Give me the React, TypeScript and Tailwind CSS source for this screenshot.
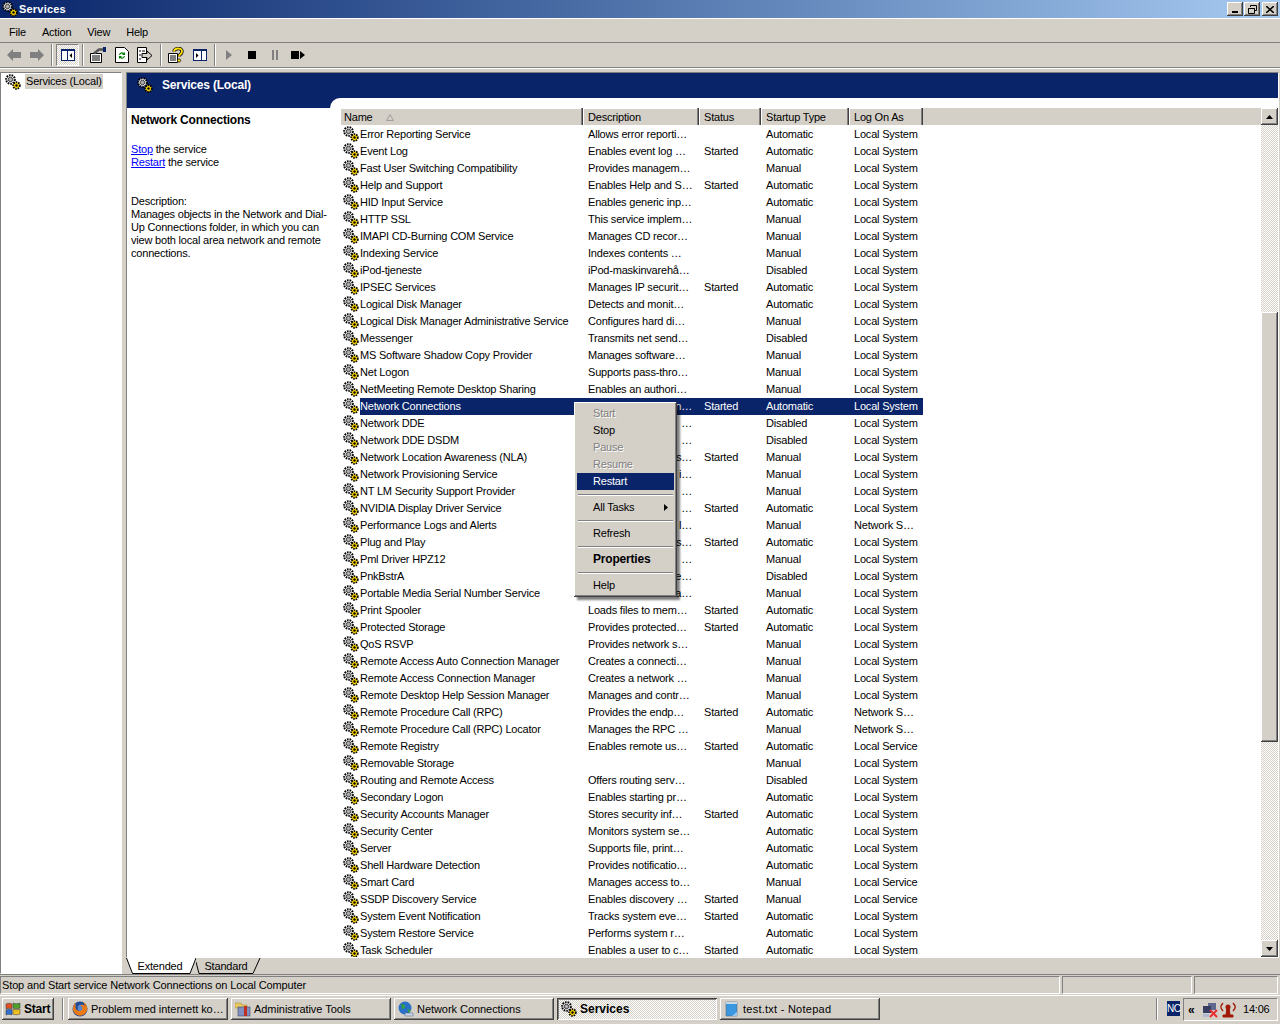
import { ReactNode } from "react";

const raised =
  "bg-[#d4d0c8] shadow-[inset_-1px_-1px_#404040,inset_1px_1px_#fff,inset_-2px_-2px_#808080,inset_2px_2px_#d4d0c8]";
const sunken = "border-t border-l border-t-[#808080] border-l-[#808080] border-b border-r border-b-white border-r-white";
const checker =
  "bg-[repeating-conic-gradient(#d4d0c8_0_25%,#fff_0_50%)] bg-[length:2px_2px]";

// name | description | status | startup (A/M/D) | log on (S/N/L)
const services = [
  "Error Reporting Service|Allows error reporti…||A|S",
  "Event Log|Enables event log …|Started|A|S",
  "Fast User Switching Compatibility|Provides managem…||M|S",
  "Help and Support|Enables Help and S…|Started|A|S",
  "HID Input Service|Enables generic inp…||A|S",
  "HTTP SSL|This service implem…||M|S",
  "IMAPI CD-Burning COM Service|Manages CD recor…||M|S",
  "Indexing Service|Indexes contents …||M|S",
  "iPod-tjeneste|iPod-maskinvarehå…||D|S",
  "IPSEC Services|Manages IP securit…|Started|A|S",
  "Logical Disk Manager|Detects and monit…||A|S",
  "Logical Disk Manager Administrative Service|Configures hard di…||M|S",
  "Messenger|Transmits net send…||D|S",
  "MS Software Shadow Copy Provider|Manages software…||M|S",
  "Net Logon|Supports pass-thro…||M|S",
  "NetMeeting Remote Desktop Sharing|Enables an authori…||M|S",
  "Network Connections|n…|Started|A|S",
  "Network DDE|…||D|S",
  "Network DDE DSDM|…||D|S",
  "Network Location Awareness (NLA)|s…|Started|M|S",
  "Network Provisioning Service|i…||M|S",
  "NT LM Security Support Provider|…||M|S",
  "NVIDIA Display Driver Service|…|Started|A|S",
  "Performance Logs and Alerts|l…||M|N",
  "Plug and Play|s…|Started|A|S",
  "Pml Driver HPZ12|…||M|S",
  "PnkBstrA|e…||D|S",
  "Portable Media Serial Number Service|a…||M|S",
  "Print Spooler|Loads files to mem…|Started|A|S",
  "Protected Storage|Provides protected…|Started|A|S",
  "QoS RSVP|Provides network s…||M|S",
  "Remote Access Auto Connection Manager|Creates a connecti…||M|S",
  "Remote Access Connection Manager|Creates a network …||M|S",
  "Remote Desktop Help Session Manager|Manages and contr…||M|S",
  "Remote Procedure Call (RPC)|Provides the endp…|Started|A|N",
  "Remote Procedure Call (RPC) Locator|Manages the RPC …||M|N",
  "Remote Registry|Enables remote us…|Started|A|L",
  "Removable Storage|||M|S",
  "Routing and Remote Access|Offers routing serv…||D|S",
  "Secondary Logon|Enables starting pr…||A|S",
  "Security Accounts Manager|Stores security inf…|Started|A|S",
  "Security Center|Monitors system se…||A|S",
  "Server|Supports file, print…||A|S",
  "Shell Hardware Detection|Provides notificatio…||A|S",
  "Smart Card|Manages access to…||M|L",
  "SSDP Discovery Service|Enables discovery …|Started|M|L",
  "System Event Notification|Tracks system eve…|Started|A|S",
  "System Restore Service|Performs system r…||A|S",
  "Task Scheduler|Enables a user to c…|Started|A|S",
].map((s) => s.split("|"));

const startup: Record<string, string> = { A: "Automatic", M: "Manual", D: "Disabled" };
const logon: Record<string, string> = { S: "Local System", N: "Network S…", L: "Local Service" };

function Gears({ className = "" }: { className?: string }) {
  return (
    <svg viewBox="0 0 16 16" className={`w-4 h-4 shrink-0 ${className}`}>
      <circle cx="5.500" cy="5.500" r="4.300" fill="#fff" stroke="#000" strokeWidth="2" strokeDasharray="1.600 1" />
      <circle cx="5.500" cy="5.500" r="2.200" fill="#b0b0b0" stroke="#000" strokeWidth=".7" />
      <circle cx="11.500" cy="11.500" r="3.300" fill="#ffd800" stroke="#000" strokeWidth="1.800" strokeDasharray="1.500 .9" />
      <circle cx="11.500" cy="11.500" r="1.200" fill="#000" />
    </svg>
  );
}

function Tool({ children, className = "" }: { children: ReactNode; className?: string }) {
  return <div className={`w-[23px] h-[22px] flex items-center justify-center ${className}`}>{children}</div>;
}

function Sep() {
  return <div className="w-[2px] h-[22px] mx-[3px] bg-[#808080] border-r border-white" />;
}

function Toolbar() {
  return (
    <div className="h-[25px] border-b border-b-[#808080] flex items-center pl-[2px]">
      <Tool>
        <svg viewBox="0 0 14 12" className="w-[14px] h-[12px]"><path d="M0 6 6 0v3h8v6H6v3z" fill="#808080" /></svg>
      </Tool>
      <Tool>
        <svg viewBox="0 0 14 12" className="w-[14px] h-[12px]"><path d="M14 6 8 0v3H0v6h8v3z" fill="#808080" /></svg>
      </Tool>
      <Sep />
      <Tool className={`${checker} border border-t-[#808080] border-l-[#808080] border-r-white border-b-white`}>
        <svg viewBox="0 0 14 12" className="w-[14px] h-[12px]">
          <rect x=".5" y=".5" width="13" height="11" fill="#fff" stroke="#0a246a" />
          <rect x="0" y="0" width="14" height="2" fill="#0a246a" />
          <rect x="6" y="0" width="1" height="12" fill="#0a246a" />
          <path d="M11 4v5L8.500 6.500z" fill="#000" />
        </svg>
      </Tool>
      <Sep />
      <Tool className="-ml-[1px] mr-[1px]">
        <svg viewBox="0 0 16 16" className="w-4 h-4">
          <path d="M.5 6.500h11v9H.5z" fill="#fff" stroke="#000" />
          <path d="M2 9h8M2 11h8M2 13h8" stroke="#000" />
          <path d="M4 6.500 9 2.500h5" fill="none" stroke="#555" strokeWidth="2.500" />
          <rect x="13" y="0" width="3" height="5" fill="#0a246a" />
        </svg>
      </Tool>
      <Tool>
        <svg viewBox="0 0 14 16" className="w-[14px] h-4">
          <path d="M.5.5h9l4 4v11H.5z" fill="#fff" stroke="#000" />
          <path d="M4 8a3 3 0 0 1 5-2l1-1v3H7l1-1a2 2 0 0 0-3 1zM10 9a3 3 0 0 1-5 2l-1 1V9h3l-1 1a2 2 0 0 0 3-1z" fill="#008000" />
        </svg>
      </Tool>
      <Tool>
        <svg viewBox="0 0 16 16" className="w-4 h-4">
          <path d="M.5.5h9v15H.5z" fill="#fff" stroke="#000" />
          <path d="M2 4h2M2 8h2M2 12h2M5 4h3" stroke="#000" />
          <path d="M5 6.500h5V4l5 4.500-5 4.500v-2.500H5z" fill="#d4d0c8" stroke="#000" />
        </svg>
      </Tool>
      <div className="w-[2px] h-[22px] mx-[3px] ml-[4px] bg-[#808080] border-r border-white" />
      <Tool className="-ml-[1px] mr-[1px]">
        <svg viewBox="0 0 16 16" className="w-4 h-4">
          <path d="M.5 6.500h9v9h-9z" fill="#fff" stroke="#000" />
          <path d="M2 9h6M2 11h6M2 13h6" stroke="#000" />
          <path d="M6 4.500C6 1 14 0 14 4.500c0 3-3 2.500-3 5" fill="none" stroke="#000" strokeWidth="3.400" />
          <path d="M6 4.500C6 1 14 0 14 4.500c0 3-3 2.500-3 5" fill="none" stroke="#ffe000" strokeWidth="1.800" />
          <circle cx="11" cy="13.500" r="1.600" fill="#ffe000" stroke="#000" strokeWidth=".7" />
        </svg>
      </Tool>
      <Tool>
        <svg viewBox="0 0 14 12" className="w-[14px] h-[12px]">
          <rect x=".5" y=".5" width="13" height="11" fill="#fff" stroke="#0a246a" />
          <rect x="0" y="0" width="14" height="2" fill="#0a246a" />
          <rect x="8" y="0" width="1" height="12" fill="#0a246a" />
          <path d="M3 4v5l2.500-2.500z" fill="#000" />
        </svg>
      </Tool>
      <div className="w-[2px] h-[22px] ml-[3px] mr-[1px] bg-[#808080] border-r border-white" />
      <Tool>
        <svg viewBox="0 0 6 10" className="w-[6px] h-[10px]"><path d="M0 0l6 5-6 5z" fill="#808080" /></svg>
      </Tool>
      <Tool>
        <div className="w-[8px] h-[8px] bg-black" />
      </Tool>
      <Tool>
        <div className="w-[6px] h-[10px] border-x-2 border-[#808080]" />
      </Tool>
      <Tool>
        <svg viewBox="0 0 14 8" className="w-[14px] h-[8px]"><path d="M0 0h8v8H0zM9 0l5 4-5 4z" fill="#000" /></svg>
      </Tool>
    </div>
  );
}

function ServiceRow({ row, index }: { row: string[]; index: number }) {
  const selected = index === 16;
  const tail = index >= 16 && index <= 27;
  return (
    <div className="h-[17px] flex leading-[17px] whitespace-nowrap">
      <div className="w-[20px] shrink-0 pl-[3px]">
        <Gears />
      </div>
      <div className={`flex ${selected ? "bg-[#0a246a] text-white" : ""}`}>
        <div className="w-[222px]">{row[0]}</div>
        <div className={`w-[116px] pl-[6px] pr-[6px] ${tail ? "text-right" : ""}`}>{row[1]}</div>
        <div className="w-[62px] pl-[6px]">{row[2]}</div>
        <div className="w-[88px] pl-[6px]">{startup[row[3]]}</div>
        <div className="w-[75px] pl-[6px]">{logon[row[4]]}</div>
      </div>
    </div>
  );
}

function HeaderCell({ width, children }: { width: string; children: ReactNode }) {
  return (
    <div className={`${width} h-full pl-[5px] pt-[1px] border-r border-r-[#404040] shadow-[inset_-1px_0_#808080,inset_1px_1px_#fff] flex items-center`}>
      {children}
    </div>
  );
}

function Scrollbar() {
  return (
    <div className="w-[17px] shrink-0 flex flex-col">
      <div className={`${raised} h-[17px] flex items-center justify-center`}>
        <svg viewBox="0 0 7 4" className="w-[7px] h-[4px]"><path d="M3.500 0 7 4H0z" /></svg>
      </div>
      <div className={`${checker} h-[187px]`} />
      <div className={`${raised} h-[430px]`} />
      <div className={`${checker} flex-1`} />
      <div className={`${raised} h-[17px] flex items-center justify-center`}>
        <svg viewBox="0 0 7 4" className="w-[7px] h-[4px]"><path d="M3.500 4 7 0H0z" /></svg>
      </div>
    </div>
  );
}

function ContextMenu() {
  const disabled = "text-[#808080] [text-shadow:1px_1px_#fff]";
  const item = "h-[17px] leading-[17px] pl-[16px]";
  const line = <div className="h-[9px] flex items-center mx-[1px]"><div className="w-full h-[2px] bg-[#808080] border-b border-white" /></div>;
  return (
    <div className="absolute left-[574px] top-[402px] w-[103px] h-[195px] px-[3px] py-[3px] text-black shadow-[inset_-1px_-1px_#404040,inset_1px_1px_#fff,inset_-2px_-2px_#808080,3px_3px_2px_#00000080] bg-[#d4d0c8]">
      <div className={`${item} ${disabled}`}>Start</div>
      <div className={item}>Stop</div>
      <div className={`${item} ${disabled}`}>Pause</div>
      <div className={`${item} ${disabled}`}>Resume</div>
      <div className={`${item} bg-[#0a246a] text-white`}>Restart</div>
      {line}
      <div className={`${item} flex items-center justify-between pr-[6px]`}>
        All Tasks
        <svg viewBox="0 0 4 7" className="w-[4px] h-[7px]"><path d="M0 0l4 3.500L0 7z" /></svg>
      </div>
      {line}
      <div className={item}>Refresh</div>
      {line}
      <div className={`${item} font-bold text-[12px]`}>Properties</div>
      {line}
      <div className={item}>Help</div>
    </div>
  );
}

function Tabs() {
  return (
    <div className="h-[16px] flex">
      <div className="relative w-[70px] h-[16px] flex items-center justify-center">
        <svg viewBox="0 0 70 16" className="absolute inset-0 w-[70px] h-[16px]">
          <path d="M.5 0 6.500 15.500H64L70 0" fill="#fff" stroke="#000" />
        </svg>
        <span className="relative pr-[2px]">Extended</span>
      </div>
      <div className="relative w-[65px] h-[16px] flex items-center justify-center">
        <svg viewBox="0 0 65 16" className="absolute inset-0 w-[65px] h-[16px]">
          <path d="M0 4 3 15.500H57L64 0" fill="none" stroke="#000" />
        </svg>
        <span className="relative pr-[5px]">Standard</span>
      </div>
    </div>
  );
}

function TaskButton({ icon, label, active, labelClass = "tracking-[-0.05px]" }: { icon: ReactNode; label: string; active?: boolean; labelClass?: string }) {
  return (
    <div
      className={`w-[160px] h-[22px] flex items-center gap-[3px] pl-[4px] whitespace-nowrap ${
        active
          ? `${checker} font-bold text-[12px] shadow-[inset_1px_1px_#404040,inset_-1px_-1px_#fff,inset_2px_2px_#808080]`
          : raised
      }`}
    >
      {icon}
      <span className={labelClass}>{label}</span>
    </div>
  );
}

const firefox = (
  <svg viewBox="0 0 16 16" className="w-4 h-4 shrink-0">
    <circle cx="8" cy="8" r="7.500" fill="#1f4a98" />
    <circle cx="9" cy="7" r="3.500" fill="#5a88d0" />
    <path d="M2.500 2C3 3.500 1 5 .8 8a7.300 7.300 0 0 0 14.400 1c.5-3.500-1.500-7-5-8.500 2 1.500 2.500 3 2.300 4.500-1-1.300-3-1.500-4.500-.5 2 .2 3 2.300 2 4.200s-5.500 2-6.500-2c-.2-1.200 0-2 .5-2.700z" fill="#ec7a12" />
  </svg>
);
const adminTools = (
  <svg viewBox="0 0 16 16" className="w-4 h-4 shrink-0">
    <path d="M0 2h6l1 2h5v3H0z" fill="#e8c860" stroke="#a08020" strokeWidth=".5" />
    <rect x="3" y="6" width="12" height="9" fill="#8090c0" stroke="#404870" strokeWidth=".6" />
    <rect x="9" y="5" width="3" height="10" fill="#c03020" />
  </svg>
);
const netConn = (
  <svg viewBox="0 0 16 16" className="w-4 h-4 shrink-0">
    <circle cx="7" cy="7" r="6.500" fill="#2a70c8" />
    <path d="M3 3l4 1 0 3-3 1zM9 8l4 1-2 3z" fill="#30a040" />
    <path d="M7 12h8v3H7z" fill="#c8d4e8" stroke="#506080" strokeWidth=".5" />
  </svg>
);
const notepad = (
  <svg viewBox="0 0 16 16" className="w-4 h-4 shrink-0">
    <path d="M2 1h11v14H2z" fill="#3a98e0" stroke="#506880" strokeWidth=".6" />
    <path d="M2 1h11v2H2z" fill="#c8d8e8" />
    <path d="M8 15l5-4v4z" fill="#9cc8f0" />
  </svg>
);

export default function App() {
  return (
    <div className="relative w-[1280px] h-[1024px] overflow-hidden bg-[#d4d0c8] text-[11px] tracking-[-0.2px] text-black font-['Liberation_Sans',sans-serif] flex flex-col">
      {/* Title bar */}
      <div className="h-[18px] shrink-0 bg-gradient-to-r from-[#0a246a] to-[#a6caf0] flex items-center pl-[2px] pr-[2px] text-white font-bold tracking-[0.2px]">
        <Gears />
        <span className="ml-[1px] flex-1">Services</span>
        <div className="flex items-center">
          <div className={`${raised} w-[16px] h-[14px] flex items-end justify-center pb-[3px]`}>
            <div className="w-[6px] h-[2px] bg-black" />
          </div>
          <div className={`${raised} w-[16px] h-[14px] ml-[1px] flex items-center justify-center`}>
            <svg viewBox="0 0 9 9" className="w-[9px] h-[9px]"><path d="M2.500 2V.5h6v5H7M.5 3.500h6v5h-6zM.5 3.500h6" fill="none" stroke="#000" /></svg>
          </div>
          <div className={`${raised} w-[16px] h-[14px] ml-[2px] flex items-center justify-center`}>
            <svg viewBox="0 0 8 7" className="w-[8px] h-[7px]"><path d="M0 0l8 7M8 0 0 7" stroke="#000" strokeWidth="1.600" /></svg>
          </div>
        </div>
      </div>

      {/* Menu bar */}
      <div className="h-[25px] shrink-0 border-t border-t-white border-b border-b-[#808080] flex items-center pl-[9px] pt-[3px] gap-[16px]">
        <span>File</span>
        <span>Action</span>
        <span>View</span>
        <span>Help</span>
      </div>

      <Toolbar />
      <div className="h-[4px] shrink-0 border-t border-white" />

      {/* Main area */}
      <div className="h-[902px] shrink-0 flex">
        <div className={`w-[122px] shrink-0 bg-white ${sunken} pl-[4px] pt-[1px]`}>
          <div className="flex items-center h-[15px] gap-[4px]">
            <Gears />
            <span className="bg-[#d4d0c8] px-[1px] leading-[15px]">Services (Local)</span>
          </div>
        </div>
        <div className="w-[4px] shrink-0" />
        <div className="w-[1153px] shrink-0 flex flex-col">
          <div className={`h-[886px] shrink-0 bg-white ${sunken} flex flex-col overflow-hidden`}>
            <div className="relative h-[35px] shrink-0 bg-[#0a246a] flex items-center gap-[9px] pl-[10px] pb-[12px] text-white font-bold text-[12px]">
              <Gears />
              <span>Services (Local)</span>
              <div className="absolute left-[203px] right-0 bottom-0 h-[10px] bg-white rounded-tl-[10px]" />
            </div>
            <div className="flex-1 flex min-h-0">
              <div className="w-[213px] shrink-0 pl-[4px] pt-[6px] leading-[13px] whitespace-nowrap">
                <div className="font-bold text-[12px] mb-[16px]">Network Connections</div>
                <div><a className="text-[#0000ff] underline">Stop</a> the service</div>
                <div className="mb-[26px]"><a className="text-[#0000ff] underline">Restart</a> the service</div>
                <div>Description:</div>
                <div>Manages objects in the Network and Dial-</div>
                <div>Up Connections folder, in which you can</div>
                <div>view both local area network and remote</div>
                <div>connections.</div>
              </div>
              <div className="flex-1 min-w-0 flex flex-col overflow-hidden">
                <div className="h-[17px] shrink-0 flex bg-[#d4d0c8]">
                  <HeaderCell width="w-[243px]">
                    <span className="-ml-[1px]">Name</span>
                    <svg viewBox="0 0 8 7" className="w-[8px] h-[7px] ml-[13px]"><path d="M4 .5 7.500 6.500H.5z" fill="none" stroke="#a0a0a0" /></svg>
                  </HeaderCell>
                  <HeaderCell width="w-[116px]">Description</HeaderCell>
                  <HeaderCell width="w-[62px]">Status</HeaderCell>
                  <HeaderCell width="w-[88px]">Startup Type</HeaderCell>
                  <HeaderCell width="w-[74px]">Log On As</HeaderCell>
                </div>
                <div className="pt-[1px]">
                  {services.map((row, i) => (
                    <ServiceRow key={row[0]} row={row} index={i} />
                  ))}
                </div>
              </div>
              <Scrollbar />
            </div>
          </div>
          <Tabs />
        </div>
      </div>

      {/* Status bar */}
      <div className="h-[21px] shrink-0 flex gap-[2px] pt-[1px] pb-[1px] pr-[2px] border-t border-t-[#808080]">
        <div className={`w-[1060px] ${sunken} pl-[1px] leading-[17px] tracking-[-0.13px]`}>Stop and Start service Network Connections on Local Computer</div>
        <div className={`w-[130px] ${sunken}`} />
        <div className={`flex-1 ${sunken}`} />
      </div>

      {/* Taskbar */}
      <div className="h-[29px] shrink-0 border-t border-white flex items-start pt-[2px] pl-[2px] pr-[2px]">
        <div className={`${raised} w-[52px] h-[22px] flex items-center gap-[3px] pl-[3px] font-bold text-[12px]`}>
          <svg viewBox="0 0 16 16" className="w-[16px] h-[16px] shrink-0">
            <path d="M1 3c2-1 4-1 6 0v5c-2-1-4-1-6 0z" fill="#e05020" stroke="#333" strokeWidth=".5" />
            <path d="M8 2c2 1 5 1 7 0v5c-2 1-5 1-7 0z" fill="#50a030" stroke="#333" strokeWidth=".5" />
            <path d="M1 9c2-1 4-1 6 0v5c-2-1-4-1-6 0z" fill="#3070d0" stroke="#333" strokeWidth=".5" />
            <path d="M8 8c2 1 5 1 7 0v5c-2 1-5 1-7 0z" fill="#f0c020" stroke="#333" strokeWidth=".5" />
          </svg>
          Start
        </div>
        <div className="w-[2px] h-[22px] ml-[8px] mr-[4px] bg-[#808080] border-r border-white" />
        <div className="flex gap-[3px]">
          <TaskButton icon={firefox} label="Problem med internett ko…" />
          <TaskButton icon={adminTools} label="Administrative Tools" />
          <TaskButton icon={netConn} label="Network Connections" />
          <TaskButton icon={<Gears />} label="Services" active labelClass="tracking-[0px]" />
          <TaskButton icon={notepad} label="test.txt - Notepad" labelClass="tracking-[0.25px]" />
        </div>
        <div className="flex-1" />
        <div className="w-[2px] h-[22px] mr-[9px] bg-white border-l border-[#808080]" />
        <div className="w-[13px] h-[15px] mt-[3px] mr-[3px] bg-[#0a246a] text-white text-[10px] tracking-[-0.5px] leading-[15px] text-center">NC</div>
        <div className="w-[95px] h-[23px] flex items-center pl-[4px] border-t border-l border-t-[#808080] border-l-[#808080] border-b border-r border-b-white border-r-white">
          <span className="font-bold text-[12px] w-[14px]">«</span>
          <svg viewBox="0 0 16 16" className="w-4 h-4 shrink-0">
            <rect x="6" y="1" width="8" height="7" fill="#606890" />
            <rect x="1" y="4" width="8" height="7" fill="#383c60" />
            <rect x="1" y="12" width="6" height="3" fill="#b0b8d8" />
            <path d="M8 8l7 7M15 8l-7 7" stroke="#e83030" strokeWidth="2" />
          </svg>
          <svg viewBox="0 0 16 16" className="w-4 h-4 shrink-0 ml-[2px]">
            <circle cx="8" cy="5" r="2.500" fill="#a01808" />
            <path d="M7 5h2l1 8H6zM3 15h10v-2H3z" fill="#a01808" stroke="#a01808" />
            <path d="M3 1C0 4 0 6 3 9M13 1c3 3 3 5 0 8" fill="none" stroke="#a01808" strokeWidth="1.400" />
          </svg>
          <span className="ml-[7px]">14:06</span>
        </div>
      </div>

      <ContextMenu />
    </div>
  );
}
